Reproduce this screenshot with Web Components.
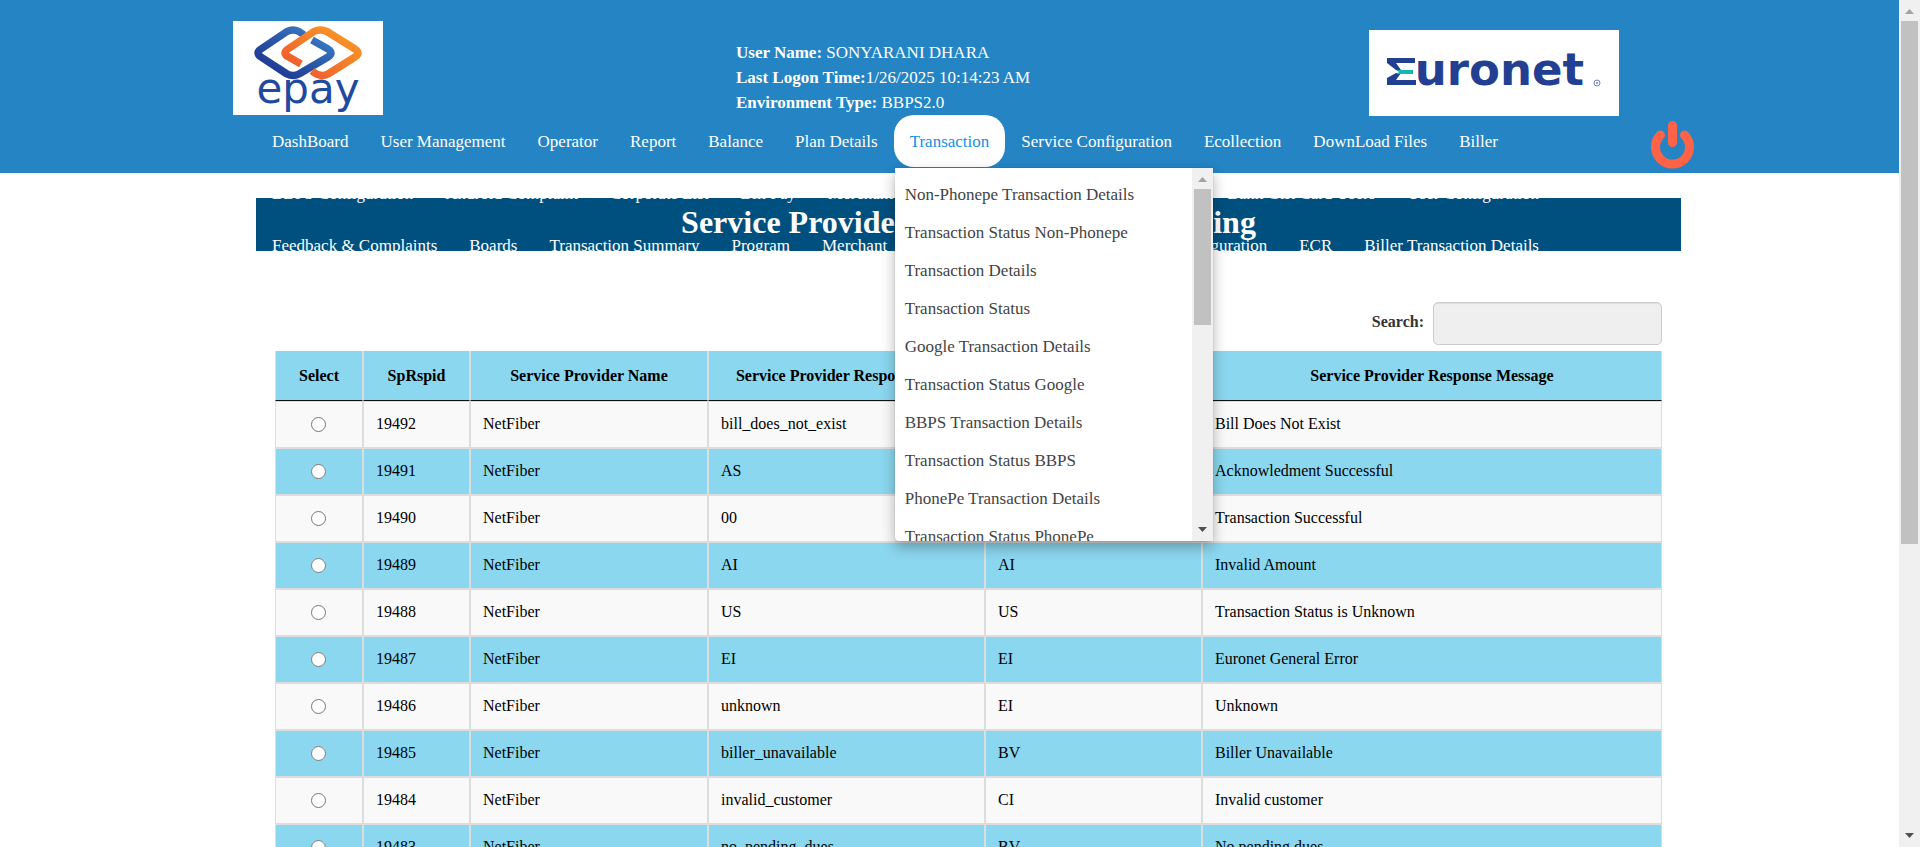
<!DOCTYPE html>
<html lang="en">
<head>
<meta charset="utf-8">
<title>Service Provider Response Code Mapping</title>
<style>
  html, body { margin: 0; height: 100%; }
  body { font-family: "Liberation Serif", "Times New Roman", serif; font-size: 16px; color: #000; background: #fff; overflow: hidden; }
</style>
</head>
<body>
<portal-app></portal-app>
<script>
const define = (name, html, setup) => {
  const tpl = document.createElement('template');
  tpl.innerHTML = html;
  customElements.define(name, class extends HTMLElement {
    constructor() {
      super();
      this.attachShadow({ mode: 'open' }).append(tpl.content.cloneNode(true));
    }
    connectedCallback() { if (setup) setup(this.shadowRoot, this); }
  });
};

define('scroll-rail', `
  <style>
    :host { display: flex; flex-direction: column; width: 21px; background: #f0f0f0; box-sizing: border-box; }
    svg { display: block; flex: none; }
    .track { flex: 1; padding: 0 2px; }
    .thumb { height: var(--thumb, 50%); background: #c1c1c1; }
  </style>
  <svg width="21" height="21" viewBox="0 0 21 21"><path d="M6 14h9l-4.500-5z" fill="#a3a3a3"/></svg>
  <div class="track"><div class="thumb"></div></div>
  <svg width="21" height="21" viewBox="0 0 21 21"><path d="M6 7h9l-4.500 5z" fill="#505050"/></svg>`);

define('epay-logo', `
  <style>:host { display: block; width: 150px; height: 94px; background: #fff; } svg { display: block; }</style>
  <svg width="150" height="94" viewBox="0 0 150 94" role="img" aria-label="epay">
    <defs>
      <linearGradient id="b" x1="0" y1="1" x2="1" y2="0"><stop offset="0" stop-color="#1c2f8c"/><stop offset=".5" stop-color="#2a55a8"/><stop offset="1" stop-color="#3f86cc"/></linearGradient>
      <linearGradient id="o" x1="0" y1="1" x2="1" y2="0"><stop offset="0" stop-color="#ef5130"/><stop offset=".5" stop-color="#f47a2a"/><stop offset="1" stop-color="#fb9d24"/></linearGradient>
    </defs>
    <g fill="none" stroke-width="7.500" stroke-linejoin="round">
      <path d="M71 14L66 10.500Q60 7.500 54 10.500L28 28Q22 32 28 36L54 53Q60 56 66 53L95 36Q101 32 95 28L79 19" stroke="url(#b)"/>
      <path d="M68 43L55 35.500Q49 32 55 28L81 10.500Q87 7.500 94 10.500L122 28Q128 32 122 36L95 53Q87 57 79 50" stroke="url(#o)"/>
    </g>
    <text x="75" y="82" text-anchor="middle" font-family="DejaVu Sans" font-size="42" fill="#1e4b9f">epay</text>
  </svg>`);

define('euronet-logo', `
  <style>:host { display: block; width: 250px; height: 86px; background: #fff; } svg { display: block; }</style>
  <svg width="250" height="86" viewBox="0 0 250 86" role="img" aria-label="Euronet">
    <text x="15" y="55" font-family="DejaVu Sans" font-size="45" font-weight="700" fill="#233f92">Euronet</text>
    <path d="M17 20h32v36h-32z" fill="#fff"/>
    <path d="M18 28h28v5h-19l5 7h-5l-9-7zM18 55v-7l9-5h5l-5 7h20v5z" fill="#233f92"/>
    <path d="M27 40h17v4h-17l3-2z" fill="#13b9b0"/>
    <circle cx="228" cy="53" r="3" fill="none" stroke="#6d7fb8"/><circle cx="228" cy="53" r="1" fill="#6d7fb8"/>
  </svg>`);

define('user-info', `
  <style>
    :host { display: block; color: #fff; font-size: 17px; line-height: 25px; white-space: nowrap; }
    p { margin: 0; }
  </style>
  <p><b>User Name:</b> SONYARANI DHARA</p>
  <p><b>Last Logon Time:</b>1/26/2025 10:14:23 AM</p>
  <p><b>Environment Type:</b> BBPS2.0</p>`);

define('drop-menu', `
  <style>
    :host { display: grid; grid-template-columns: 1fr 21px; width: 318px; height: 373px; background: #fff; border-radius: 0 0 4px 4px; box-shadow: 0 0 1px rgba(0,0,0,.4), 0 6px 14px rgba(0,0,0,.3); }
    ul { list-style: none; margin: 0; padding: 8px 10px 0; overflow: hidden; min-height: 0; }
    a { display: block; font-size: 17px; line-height: 38px; color: #444; text-decoration: none; white-space: nowrap; }
    scroll-rail { --thumb: 41%; }
  </style>
  <ul></ul><scroll-rail></scroll-rail>`, root => {
  root.querySelector('ul').innerHTML = ['Non-Phonepe Transaction Details', 'Transaction Status Non-Phonepe', 'Transaction Details',
    'Transaction Status', 'Google Transaction Details', 'Transaction Status Google', 'BBPS Transaction Details',
    'Transaction Status BBPS', 'PhonePe Transaction Details', 'Transaction Status PhonePe']
    .map(t => `<li><a href="#">${t}</a></li>`).join('');
});

define('site-nav', `
  <style>
    :host { display: block; height: 58px; padding: 0 64px 0 23px; }
    ul { display: flex; list-style: none; margin: 0; padding: 0; height: 52px; }
    li { position: relative; }
    li.push { margin-left: auto; }
    a { display: block; padding: 2px 16px 0; font-size: 17px; line-height: 50px; color: #fff; text-decoration: none; white-space: nowrap; }
    a.active { background: #fff; color: #1492e6; border-radius: 20px; }
    drop-menu { position: absolute; left: 1px; top: 53px; z-index: 5; }
  </style>
  <nav></nav>`, root => {
  const rows = [
    ['DashBoard', 'User Management', 'Operator', 'Report', 'Balance', 'Plan Details', '*Transaction', 'Service Configuration', 'Ecollection', 'DownLoad Files', 'Biller'],
    ['BBPS Configuration', 'Android Complaint', 'Corporate List', 'Bill Pay', 'Merchant', '>Bank Gift Card Users', 'User Configuration'],
    ['Feedback &amp; Complaints', 'Boards', 'Transaction Summary', 'Program', 'Merchant', '>Configuration', 'ECR', 'Biller Transaction Details']
  ];
  root.querySelector('nav').innerHTML = rows.map(r => '<ul>' + r.map(t =>
    t[0] === '*' ? `<li><a class="active" href="#">${t.slice(1)}</a><drop-menu></drop-menu></li>` :
    t[0] === '>' ? `<li class="push"><a href="#">${t.slice(1)}</a></li>` :
    `<li><a href="#">${t}</a></li>`).join('') + '</ul>').join('');
});

define('site-header', `
  <style>
    :host { display: grid; grid-template-columns: 233fr 1386fr 280fr; height: 173px; background: #2484c4; position: relative; z-index: 2; }
    .mid { grid-column: 2; min-width: 0; }
    .brands { display: grid; grid-template-columns: 503px 1fr auto; height: 115px; }
    epay-logo { margin-top: 21px; }
    user-info { margin-top: 40px; }
    euronet-logo { margin-top: 30px; }
    .side { display: flex; align-items: flex-end; padding: 0 0 4px 32px; }
    button { display: block; padding: 0; border: 0; background: none; cursor: pointer; }
    svg { display: block; }
  </style>
  <div class="mid">
    <div class="brands"><epay-logo></epay-logo><user-info></user-info><euronet-logo></euronet-logo></div>
    <site-nav></site-nav>
  </div>
  <div class="side"><button type="button" aria-label="Log out">
    <svg width="43" height="48" viewBox="0 0 43 48" fill="none" stroke="#ff6347" stroke-width="9" stroke-linecap="round"><path d="M21.500 4.500v17M9.500 14a17 17 0 1 0 24 0"/></svg>
  </button></div>`);

define('search-field', `
  <style>
    :host { display: flex; justify-content: flex-end; align-items: center; gap: 9px; }
    label { font-weight: 700; color: #333; line-height: 20px; margin-bottom: 4px; }
    input { box-sizing: border-box; width: 229px; height: 43px; border: 1px solid #ccc; border-radius: 5px; background: #efefef; box-shadow: inset 0 1px 1px rgba(0,0,0,.08); padding: 4px 8px; font: inherit; }
  </style>
  <label for="q">Search:</label><input id="q" type="search">`);

define('response-table', `
  <style>
    :host { display: block; }
    table { width: 100%; table-layout: fixed; border-collapse: separate; border-spacing: 0; line-height: 20px; }
    th, td { box-sizing: border-box; border: 1px solid #ddd; padding: 0 12px; white-space: nowrap; }
    th { height: 50px; background: #8bd7ef; border-top: 0; border-bottom-color: #111; font-weight: 700; text-align: center; }
    td { height: 47px; padding-bottom: 2px; background: #f9f9f9; text-align: left; }
    tr:nth-child(even) td { background: #8bd7ef; }
    td:first-child { text-align: center; padding: 0 13px 0 11px; }
    input { display: block; width: 15px; height: 15px; margin: 0 auto; }
  </style>
  <table>
    <colgroup><col style="width:88px"><col style="width:107px"><col style="width:238px"><col style="width:277px"><col style="width:217px"><col></colgroup>
    <thead><tr><th>Select</th><th>SpRspid</th><th>Service Provider Name</th><th>Service Provider Response Code</th><th>Euronet Code</th><th>Service Provider Response Message</th></tr></thead>
    <tbody></tbody>
  </table>`, root => {
  root.querySelector('tbody').innerHTML = [
    ['19492', 'bill_does_not_exist', 'BN', 'Bill Does Not Exist'],
    ['19491', 'AS', 'AS', 'Acknowledment Successful'],
    ['19490', '00', '00', 'Transaction Successful'],
    ['19489', 'AI', 'AI', 'Invalid Amount'],
    ['19488', 'US', 'US', 'Transaction Status is Unknown'],
    ['19487', 'EI', 'EI', 'Euronet General Error'],
    ['19486', 'unknown', 'EI', 'Unknown'],
    ['19485', 'biller_unavailable', 'BV', 'Biller Unavailable'],
    ['19484', 'invalid_customer', 'CI', 'Invalid customer'],
    ['19483', 'no_pending_dues', 'BV', 'No pending dues']
  ].map(([id, code, eu, msg]) => `<tr><td><input type="radio" name="row" aria-label="Select ${id}"></td><td>${id}</td><td>NetFiber</td><td>${code}</td><td>${eu}</td><td>${msg}</td></tr>`).join('');
});

define('page-panel', `
  <style>
    :host { display: grid; grid-template-columns: 256fr 1425fr 218fr; padding-top: 25px; }
    section { grid-column: 2; min-width: 0; }
    h1 { margin: 0; height: 53px; background: #00507f; color: #fff; font-size: 32px; line-height: 48px; text-align: center; white-space: nowrap; }
    .body { display: flex; flex-direction: column; gap: 6px; padding: 51px 19px 0; }
  </style>
  <section><h1><slot name="title"></slot></h1><div class="body"><slot></slot></div></section>`);

define('portal-app', `
  <style>
    :host { display: grid; grid-template-columns: minmax(0, 1fr) 21px; height: 100vh; overflow: hidden; }
    .page { overflow: hidden; min-height: 0; }
    scroll-rail { --thumb: 65%; }
  </style>
  <div class="page">
    <site-header></site-header>
    <page-panel><span slot="title">Service Provider Response Code Mapping</span><search-field></search-field><response-table></response-table></page-panel>
  </div>
  <scroll-rail></scroll-rail>`);
</script>
</body>
</html>
